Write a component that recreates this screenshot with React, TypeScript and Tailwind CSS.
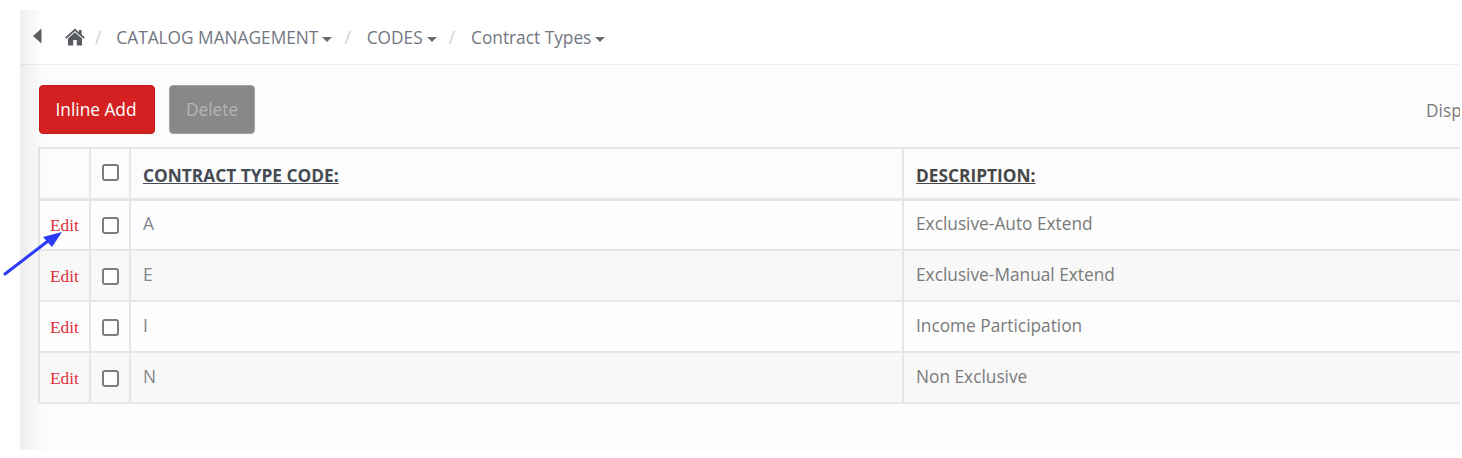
import React from 'react';

const rows = [
  { code: 'A', description: 'Exclusive-Auto Extend' },
  { code: 'E', description: 'Exclusive-Manual Extend' },
  { code: 'I', description: 'Income Participation' },
  { code: 'N', description: 'Non Exclusive' },
];

const Caret: React.FC = () => (
  <span className="ml-[4px] mt-[3px] inline-block h-0 w-0 border-x-[5px] border-t-[5px] border-x-transparent border-t-[#666c74]" />
);

const Crumb: React.FC<{ label: string }> = ({ label }) => (
  <>
    <span className="ml-[12px] mr-[16px] text-[#cfcfcf]">/</span>
    <span className="flex items-center">
      {label}
      <Caret />
    </span>
  </>
);

const Checkbox: React.FC = () => (
  <span className="block h-[17px] w-[17px] rounded-[3px] border-2 border-[#7d7d7d] bg-white" />
);

const App: React.FC = () => {
  return (
    <div className="relative h-[458px] w-[1462px] overflow-hidden bg-white font-['Open_Sans',sans-serif] text-[17.3px]">
      <div className="relative ml-[20px] mr-[2px] mt-[10px] h-[440px] bg-[#fcfcfc]">
        <div className="flex h-[55px] items-center border-b border-[#eeeeee] bg-white pl-[12px] text-[#717782]">
          <svg width="10" height="16" viewBox="0 0 10 16" className="mr-[23px] -mt-[2px]">
            <path d="M9.5 0.5V15.5L1 8Z" fill="#5f5f5f" />
          </svg>
          <svg width="20" height="18" viewBox="0 0 20 18">
            <path
              d="M10 0.5L14 4.2V2H16.6V6.6L19.8 9.6L18.6 10.8L10 3L1.4 10.8L0.2 9.6ZM10 4.2L17 10.6V17.5H11.8V12H8.2V17.5H3V10.6Z"
              fill="#575b61"
            />
          </svg>
          <span className="ml-[10px] mr-[15px] pt-[2px] text-[#cfcfcf]">/</span>
          <div className="flex items-center pt-[2px]">
            <span className="flex items-center">
              CATALOG MANAGEMENT
              <Caret />
            </span>
            <Crumb label="CODES" />
            <Crumb label="Contract Types" />
          </div>
        </div>

        <div className="flex h-[83px] items-start gap-[14px] pl-[19px] pt-[20px]">
          <button className="h-[49px] w-[116px] rounded-[4px] border border-[#c41a1a] bg-[#d42020] pr-[2px] text-white">
            Inline Add
          </button>
          <button className="h-[49px] w-[86px] rounded-[4px] border border-[#a3a3a3] bg-[#888888] text-[#b4b4b4]">
            Delete
          </button>
          <span className="ml-auto mt-[13px] w-[34px] overflow-hidden whitespace-nowrap text-[#7a7a7a]">
            Display
          </span>
        </div>

        <div className="-mt-px pl-[18px]">
          <table className="w-[1422px] table-fixed border-collapse text-left">
            <colgroup>
              <col className="w-[51px]" />
              <col className="w-[40px]" />
              <col className="w-[773px]" />
              <col />
            </colgroup>
            <thead>
              <tr className="h-[51px] border-t-2 border-b-[3px] border-[#e6e6e6]">
                <th className="border-x-2 border-[#e6e6e6]" />
                <th className="border-x-2 border-[#e6e6e6] pb-[1px] pl-[11px]">
                  <Checkbox />
                </th>
                <th className="border-x-2 border-[#e6e6e6] pl-[12px] pt-[5px] font-bold text-[#444b52] underline">
                  CONTRACT TYPE CODE:
                </th>
                <th className="border-l-2 border-[#e6e6e6] pl-[12px] pt-[5px] font-bold text-[#474747] underline">
                  DESCRIPTION:
                </th>
              </tr>
            </thead>
            <tbody>
              {rows.map((row, i) => (
                <tr
                  key={row.code}
                  className={`h-[51px] border-b-2 border-[#e6e6e6] ${i % 2 === 0 ? 'bg-[#fdfdfd]' : 'bg-[#f8f8f8]'}`}
                >
                  <td className="border-x-2 border-[#e6e6e6] pl-[10px] pt-[2px] font-['Liberation_Serif',serif] text-[17.3px] text-[#e0303b]">
                    Edit
                  </td>
                  <td className="border-x-2 border-[#e6e6e6] pl-[11px] pt-[2px]">
                    <Checkbox />
                  </td>
                  <td className="border-x-2 border-[#e6e6e6] pb-[1px] pl-[12px] text-[#7f858e]">
                    {row.code}
                  </td>
                  <td className="border-l-2 border-[#e6e6e6] pb-[1px] pl-[12px] text-[#7b7b7b]">
                    {row.description}
                  </td>
                </tr>
              ))}
            </tbody>
          </table>
        </div>

        {/* soft shadow down the left edge of the page */}
        <div className="pointer-events-none absolute inset-y-0 left-0 w-[24px] bg-linear-to-r from-black/[0.06] to-transparent" />
      </div>

      {/* annotation arrow */}
      <svg width="70" height="55" viewBox="0 0 70 55" className="absolute left-0 top-[225px]">
        <path d="M5 49L48 16" stroke="#2a3cf5" strokeWidth="3" strokeLinecap="round" />
        <path d="M62 7L43 12L52 22Z" fill="#2a3cf5" />
      </svg>
    </div>
  );
};

export default App;
